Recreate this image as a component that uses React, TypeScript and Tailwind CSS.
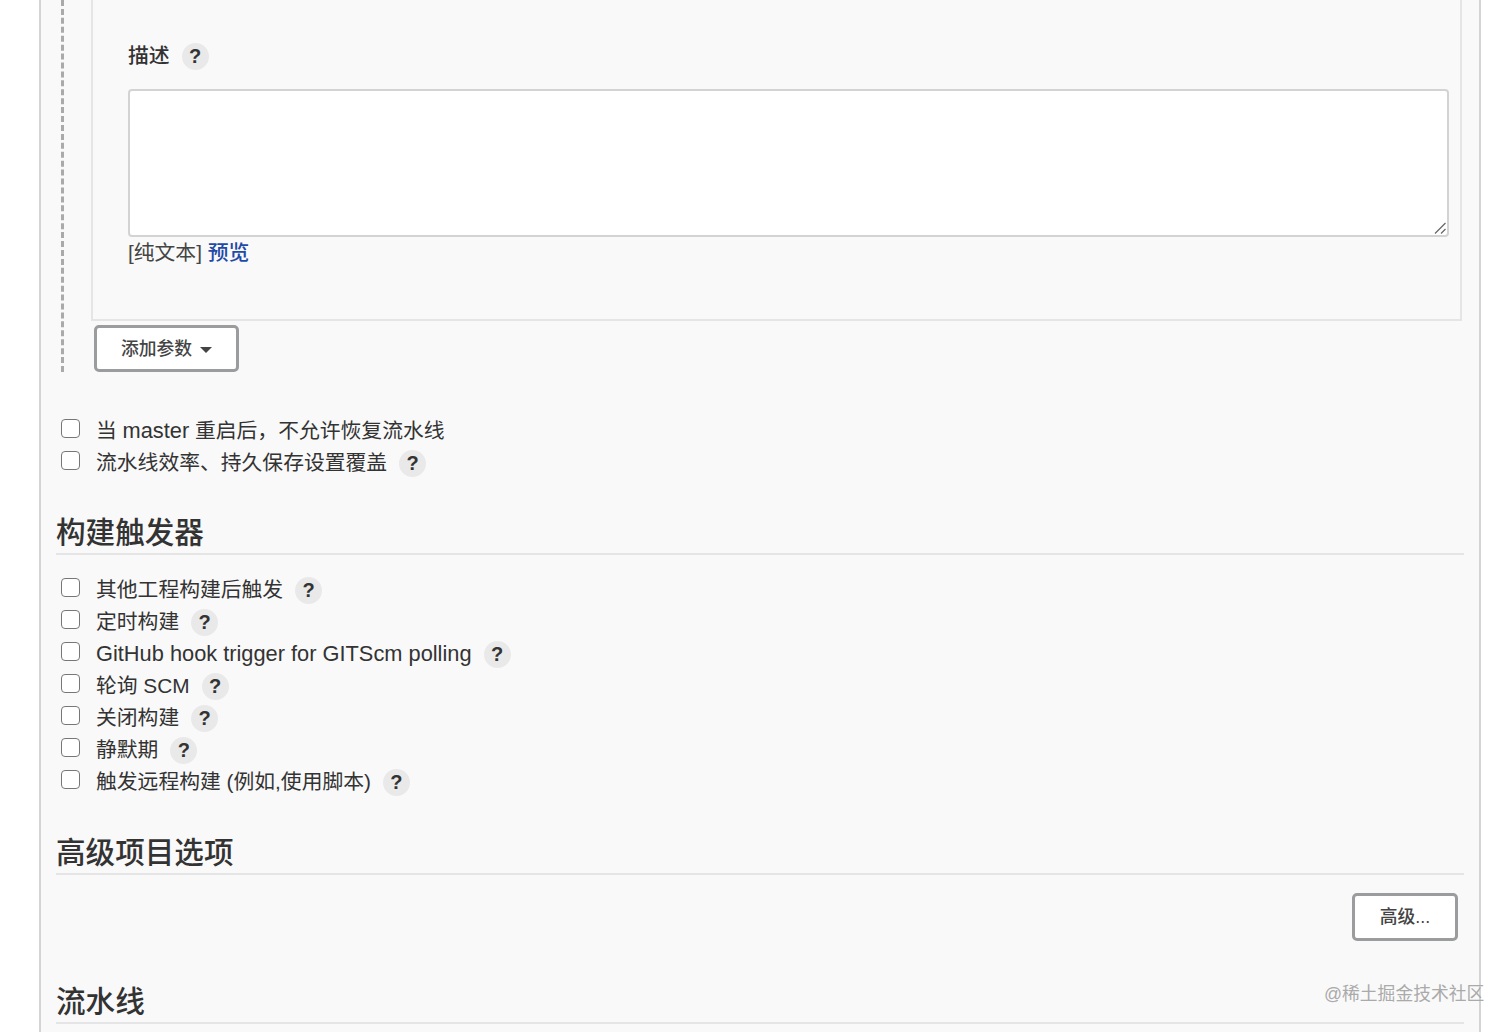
import { ReactNode } from "react";

const fontStack = "font-['Liberation_Sans','Noto_Sans_CJK_SC',sans-serif]";

// latin runs sit a little larger than the CJK text around them
function Latin({ children }: { children: ReactNode }) {
    return <span className="text-[21.8px] leading-none">{children}</span>;
}

function HelpBadge() {
    return (
        <span className="ml-3 flex h-[27px] w-[27px] shrink-0 items-center justify-center rounded-full bg-[#e9e9e9] text-[20px] font-bold leading-none text-[#333]">
            ?
        </span>
    );
}

function CheckRow({ label, help = true }: { label: ReactNode; help?: boolean }) {
    return (
        <div className="flex h-8 items-center text-[20.8px] text-[#333]">
            <input
                type="checkbox"
                className="mb-[6px] ml-[5px] mr-4 h-[19px] w-[19px] appearance-none rounded-[4px] border border-[#777] bg-white"
            />
            <span>{label}</span>
            {help && <HelpBadge />}
        </div>
    );
}

function SectionHeading({ title }: { title: string }) {
    return (
        <div className="flex h-[45px] items-end border-b-2 border-[#e5e5e5] text-[29.6px] font-medium leading-[40px] text-[#333]">
            {title}
        </div>
    );
}

function OutlineButton({ className, children }: { className: string; children: ReactNode }) {
    return (
        <button
            className={`flex items-center justify-center rounded-[5px] border-[3px] border-[#9a9c9e] bg-white text-[17.8px] font-medium text-[#444] ${className}`}
        >
            {children}
        </button>
    );
}

const triggers: { id: string; label: ReactNode }[] = [
    { id: "upstream", label: "其他工程构建后触发" },
    { id: "cron", label: "定时构建" },
    { id: "github", label: <Latin>GitHub hook trigger for GITScm polling</Latin> },
    { id: "scm", label: "轮询 SCM" },
    { id: "disable", label: "关闭构建" },
    { id: "quiet", label: "静默期" },
    { id: "remote", label: "触发远程构建 (例如,使用脚本)" },
];

export default function App() {
    return (
        <div className={`relative h-[1032px] overflow-hidden bg-white ${fontStack}`}>
            <div className="ml-[39px] h-full w-[1442px] border-x-2 border-[#d4d4d4] bg-[#f9f9f9] pl-[15px] pr-[15px]">
                {/* parameter block with the dashed guide on its left */}
                <div className="ml-[5px] flex h-[372px] w-[1403px] border-l-[3px] border-dashed border-[#aaa]">
                    <div className="ml-[27px] flex flex-col">
                        <div className="h-[322px] w-[1371px] border-x-2 border-b-2 border-[#e5e5e5] pl-[35px] pr-[11px] pt-[40px]">
                            <div className="flex h-[32px] items-center text-[20.8px] font-medium text-[#333]">
                                描述
                                <HelpBadge />
                            </div>
                            <div className="relative mt-[17px]">
                                <textarea className="block h-[148px] w-full resize-none rounded-[4px] border-2 border-[#d3d3d3] bg-white" />
                                <svg className="absolute bottom-[2px] right-[2px] h-[14px] w-[14px]" viewBox="0 0 14 14">
                                    <path d="M2 12.5 L12.5 2 M8 12.5 L12.5 8" stroke="#666" strokeWidth="1.2" fill="none" />
                                </svg>
                            </div>
                            <div className="mt-[1px] text-[20.8px] leading-[30px] text-[#444]">
                                [纯文本] <span className="font-medium text-[#1f4aa8]">预览</span>
                            </div>
                        </div>
                        <OutlineButton className="ml-[3px] mt-[4px] h-[47px] w-[145px] gap-2 pt-[2px]">
                            添加参数
                            <span className="h-0 w-0 border-x-[6px] border-t-[6px] border-x-transparent border-t-[#444]" />
                        </OutlineButton>
                    </div>
                </div>

                <div className="mt-[43px]">
                    <CheckRow label={<>当 <Latin>master</Latin> 重启后，不允许恢复流水线</>} help={false} />
                    <CheckRow label="流水线效率、持久保存设置覆盖" />
                </div>

                <div className="mt-[31px]">
                    <SectionHeading title="构建触发器" />
                </div>
                <div className="mt-[19px]">
                    {triggers.map((t) => (
                        <CheckRow key={t.id} label={t.label} />
                    ))}
                </div>

                <div className="mt-[32px]">
                    <SectionHeading title="高级项目选项" />
                </div>
                <div className="mt-[18px] flex justify-end pr-[6px]">
                    <OutlineButton className="h-[48px] w-[106px] pt-[1px]">高级...</OutlineButton>
                </div>

                <div className="mt-[38px]">
                    <SectionHeading title="流水线" />
                </div>
            </div>

            {/* site watermark over the page */}
            <div className="absolute left-[1324px] top-[981px] text-[17.8px] leading-[26px] text-[#aaa]">@稀土掘金技术社区</div>
        </div>
    );
}
